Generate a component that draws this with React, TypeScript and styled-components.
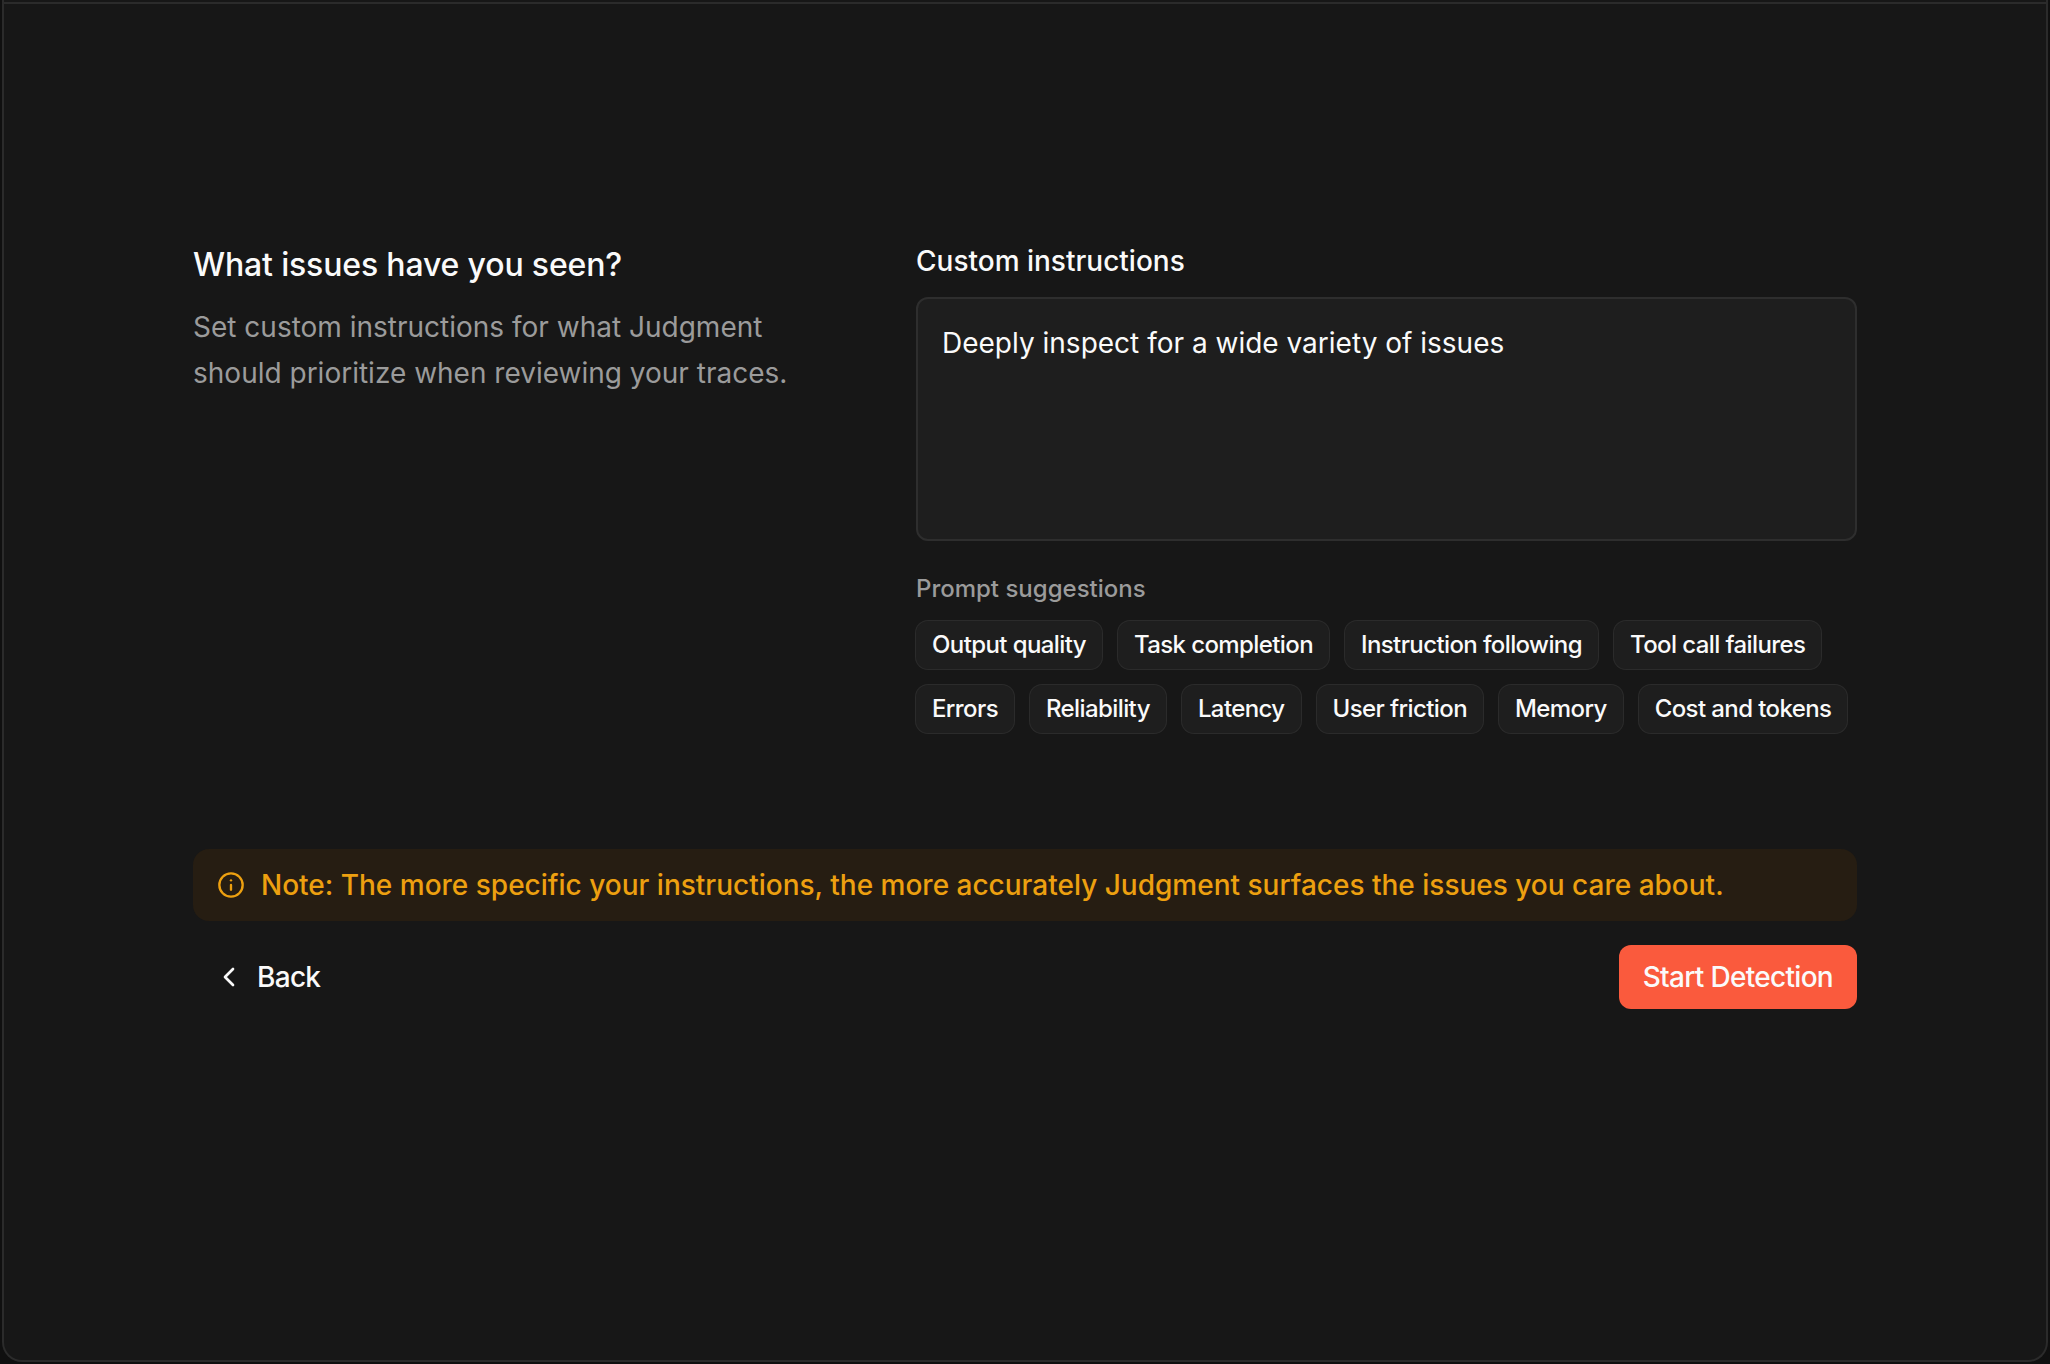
import React, { useState } from "react";
import styled, { createGlobalStyle } from "styled-components";
import { ChevronLeft, Info } from "lucide-react";

const GlobalStyle = createGlobalStyle`
  *, *::before, *::after { box-sizing: border-box; }
  body {
    margin: 0;
    background: #101010;
    color: #fafafa;
    font-family: Inter, "Liberation Sans", sans-serif;
    font-size: 28px;
    overflow: hidden;
  }
  button, textarea { font: inherit; color: inherit; margin: 0; }
`;

const Window = styled.div`
  height: 1364px;
  padding: 0 2px 2px;
`;

const Panel = styled.main`
  height: 1362px;
  border: 2px solid #2b2b2b;
  border-top: 0;
  border-radius: 0 0 20px 20px;
  background: #171717;
`;

const TopBar = styled.header`
  height: 4px;
  border-bottom: 2px solid #2b2b2b;
`;

const Step = styled.section`
  display: flex;
  flex-direction: column;
  width: 1664px;
  margin-left: 189px;
  padding-top: 236px;
`;

const Columns = styled.div`
  display: flex;
  justify-content: space-between;
`;

const Intro = styled.div`
  width: 627px;
  padding-top: 1px;
`;

const Title = styled.h1`
  margin: 0 0 16px;
  font-size: 32px;
  font-weight: 500;
  line-height: 48px;
  letter-spacing: -0.16px;
`;

const Description = styled.p`
  margin: 0;
  line-height: 45.5px;
  color: #9b9b9b;
`;

const Fields = styled.div`
  display: flex;
  flex-direction: column;
  width: 941px;
`;

const Label = styled.label`
  margin-bottom: 15px;
  font-weight: 500;
  line-height: 42px;
`;

const Instructions = styled.textarea`
  display: block;
  height: 244px;
  padding: 22px 24px;
  border: 2px solid #2e2e2e;
  border-radius: 12px;
  background: #1e1e1e;
  line-height: 45.5px;
  resize: none;
  outline: none;
`;

const SuggestionsLabel = styled.div`
  margin: 32px 0 16px;
  font-size: 24px;
  font-weight: 500;
  line-height: 32px;
  color: #9b9b9b;
`;

const Suggestions = styled.div`
  display: flex;
  flex-wrap: wrap;
  gap: 16px;
`;

const Chip = styled.button`
  height: 48px;
  padding: 0 16px;
  border: 0;
  border-radius: 12px;
  background: #1e1e1e;
  box-shadow: 0 0 0 1px #2b2b2b;
  font-size: 24px;
  font-weight: 500;
  line-height: 32px;
  letter-spacing: -0.6px;
`;

const Note = styled.div`
  display: flex;
  align-items: center;
  gap: 16px;
  height: 72px;
  margin-top: 116px;
  padding: 0 24px;
  border-radius: 16px;
  background: #261d12;
  color: #eda010;
  font-weight: 500;
`;

const Actions = styled.div`
  display: flex;
  align-items: center;
  justify-content: space-between;
  margin-top: 24px;
`;

const Button = styled.button<{ $primary?: boolean }>`
  display: flex;
  align-items: center;
  gap: 12px;
  height: 64px;
  padding: 0 ${(p) => (p.$primary ? 24 : 20)}px;
  border: 0;
  border-radius: 12px;
  background: ${(p) => (p.$primary ? "#fa5a3d" : "transparent")};
  font-weight: 500;
  letter-spacing: -0.7px;
`;

const suggestions = [
  "Output quality",
  "Task completion",
  "Instruction following",
  "Tool call failures",
  "Errors",
  "Reliability",
  "Latency",
  "User friction",
  "Memory",
  "Cost and tokens",
];

export default function App() {
  const [text, setText] = useState("Deeply inspect for a wide variety of issues");
  return (
    <Window>
      <GlobalStyle />
      <Panel>
        <TopBar />
        <Step>
          <Columns>
            <Intro>
              <Title>What issues have you seen?</Title>
              <Description>Set custom instructions for what Judgment should prioritize when reviewing your traces.</Description>
            </Intro>
            <Fields>
              <Label htmlFor="instructions">Custom instructions</Label>
              <Instructions id="instructions" spellCheck={false} value={text} onChange={(e) => setText(e.target.value)} />
              <SuggestionsLabel>Prompt suggestions</SuggestionsLabel>
              <Suggestions>
                {suggestions.map((s) => (
                  <Chip key={s} onClick={() => setText(s)}>{s}</Chip>
                ))}
              </Suggestions>
            </Fields>
          </Columns>
          <Note>
            <Info size={28} />
            <span>Note: The more specific your instructions, the more accurately Judgment surfaces the issues you care about.</span>
          </Note>
          <Actions>
            <Button>
              <ChevronLeft size={32} />
              Back
            </Button>
            <Button $primary>Start Detection</Button>
          </Actions>
        </Step>
      </Panel>
    </Window>
  );
}
